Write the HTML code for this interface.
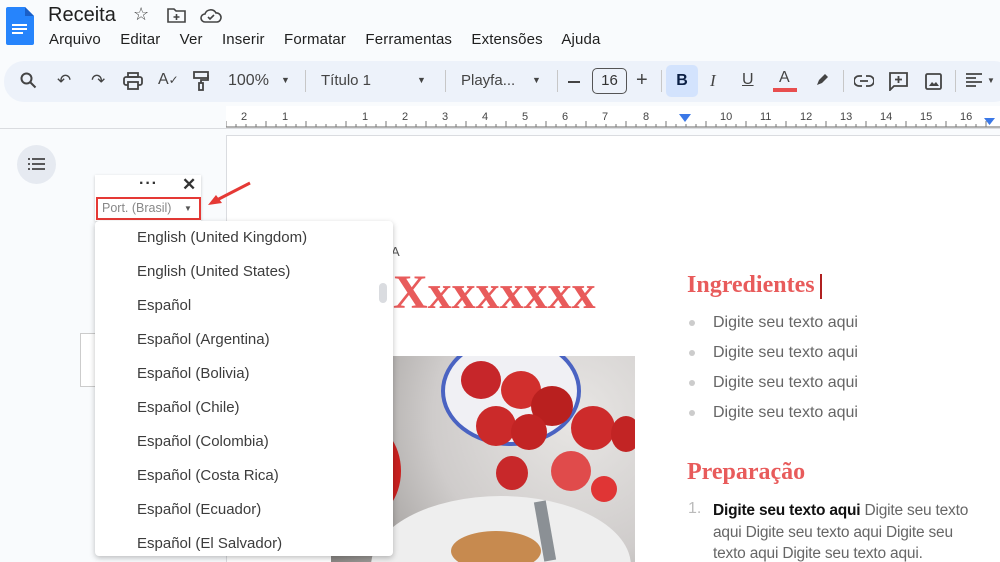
<!DOCTYPE html>
<html><head><meta charset="utf-8"><style>
*{margin:0;padding:0;box-sizing:border-box}
html,body{width:1000px;height:562px;overflow:hidden}
body{background:#f9fbfd;font-family:"Liberation Sans",sans-serif;position:relative;color:#1f1f1f}
.a{position:absolute}
.menu span{margin-right:15px}
.tb{color:#444;font-size:15px}
.sep{position:absolute;top:70px;width:1px;height:22px;background:#c7c7c7}
.item{position:absolute;left:137px;font-size:15px;color:#3c3c3c}
.serif{font-family:"Liberation Serif",serif;font-weight:bold;color:#e85b5b}
.li{position:absolute;left:713px;font-size:16px;color:#666}
.dot{position:absolute;left:689px;width:6px;height:6px;border-radius:50%;background:#ccc}
</style></head><body>
<svg class="a" style="left:6px;top:7px" width="28" height="38" viewBox="0 0 28 38"><path d="M2 0h17l9 9v27a2 2 0 0 1-2 2H2a2 2 0 0 1-2-2V2a2 2 0 0 1 2-2z" fill="#2684fc"/><path d="M19 0v9h9z" fill="#1a5fc7"/><rect x="6" y="17" width="15" height="2" fill="#fff"/><rect x="6" y="21" width="15" height="2" fill="#fff"/><rect x="6" y="25" width="11" height="2" fill="#fff"/></svg>
<div class="a" style="left:48px;top:4px;font-size:20px;color:#1f1f1f">Receita</div>
<div class="a" style="left:133px;top:4px;font-size:18px;color:#444">☆</div>
<svg class="a" style="left:167px;top:8px" width="19" height="15" viewBox="0 0 19 15"><path d="M1 1h6l2 2h9v11H1z" fill="none" stroke="#444" stroke-width="1.6"/><path d="M9.5 6v6M6.5 9h6" stroke="#444" stroke-width="1.6"/></svg>
<svg class="a" style="left:200px;top:8px" width="22" height="15" viewBox="0 0 22 15"><path d="M5 14a4 4 0 0 1 0-8 6 6 0 0 1 11-1 4.5 4.5 0 0 1 1 9z" fill="none" stroke="#444" stroke-width="1.6"/><path d="M8 9l2 2 4-4" fill="none" stroke="#444" stroke-width="1.6"/></svg>
<div class="a menu" style="left:49px;top:31px;font-size:15px;color:#1f1f1f;white-space:nowrap;letter-spacing:0.15px"><span>Arquivo</span> <span>Editar</span> <span>Ver</span> <span>Inserir</span> <span>Formatar</span> <span>Ferramentas</span> <span>Extensões</span> <span>Ajuda</span></div>
<div class="a" style="left:4px;top:61px;width:1010px;height:41px;border-radius:20px;background:#edf2fa"></div>
<svg class="a" style="left:20px;top:72px" width="17" height="17" viewBox="0 0 17 17"><circle cx="6.5" cy="6.5" r="5" fill="none" stroke="#444" stroke-width="2"/><path d="M10 10l5.5 5.5" stroke="#444" stroke-width="2"/></svg>
<div class="a tb" style="left:57px;top:71px;font-size:17px">↶</div>
<div class="a tb" style="left:91px;top:71px;font-size:17px">↷</div>
<svg class="a" style="left:123px;top:72px" width="20" height="18" viewBox="0 0 20 18"><rect x="5" y="1" width="10" height="4" fill="none" stroke="#444" stroke-width="1.8"/><rect x="1" y="5" width="18" height="8" rx="2" fill="none" stroke="#444" stroke-width="1.8"/><rect x="5" y="10" width="10" height="7" fill="#edf2fa" stroke="#444" stroke-width="1.8"/></svg>
<div class="a tb" style="left:158px;top:71px;font-size:16px">A<span style="font-size:12px">✓</span></div>
<svg class="a" style="left:193px;top:71px" width="16" height="20" viewBox="0 0 16 20"><rect x="1" y="1" width="14" height="6" fill="none" stroke="#444" stroke-width="1.8"/><path d="M15 4v5H8v3" fill="none" stroke="#444" stroke-width="1.8"/><rect x="6" y="12" width="4" height="7" fill="none" stroke="#444" stroke-width="1.8"/></svg>
<div class="a tb" style="left:228px;top:72px;font-size:16px">100%</div>
<div class="a tb" style="left:281px;top:75px;font-size:9px">▼</div>
<div class="sep" style="left:305px"></div>
<div class="a tb" style="left:321px;top:72px;font-size:15px">Título 1</div>
<div class="a tb" style="left:417px;top:75px;font-size:9px">▼</div>
<div class="sep" style="left:445px"></div>
<div class="a tb" style="left:461px;top:72px;font-size:15px">Playfa...</div>
<div class="a tb" style="left:532px;top:75px;font-size:9px">▼</div>
<div class="sep" style="left:557px"></div>
<div class="a" style="left:568px;top:81px;width:12px;height:2px;background:#444"></div>
<div class="a" style="left:592px;top:68px;width:35px;height:26px;border:1.5px solid #555;border-radius:5px;font-size:15px;text-align:center;line-height:23px;color:#333">16</div>
<div class="a tb" style="left:636px;top:69px;font-size:20px">+</div>
<div class="sep" style="left:661px"></div>
<div class="a" style="left:666px;top:65px;width:32px;height:32px;border-radius:5px;background:#d3e3fd;font-weight:bold;font-size:16px;text-align:center;line-height:32px;color:#0b1f44">B</div>
<div class="a" style="left:710px;top:71px;font-size:17px;font-style:italic;font-family:'Liberation Serif',serif;color:#444">I</div>
<div class="a" style="left:742px;top:71px;font-size:16px;text-decoration:underline;color:#444">U</div>
<div class="a" style="left:779px;top:69px;font-size:16px;color:#444">A</div>
<div class="a" style="left:773px;top:88px;width:24px;height:4px;background:#e84e4e"></div>
<svg class="a" style="left:814px;top:72px" width="16" height="16" viewBox="0 0 16 16"><path d="M3 13l2-5 6-6 3 3-6 6z" fill="#444"/></svg>
<div class="sep" style="left:843px"></div>
<svg class="a" style="left:854px;top:75px" width="20" height="12" viewBox="0 0 20 12"><path d="M8 1H5a5 5 0 0 0 0 10h3M12 1h3a5 5 0 0 1 0 10h-3M6 6h8" fill="none" stroke="#444" stroke-width="1.8"/></svg>
<svg class="a" style="left:889px;top:72px" width="19" height="19" viewBox="0 0 19 19"><path d="M1 1h17v13H5l-4 4z" fill="none" stroke="#444" stroke-width="1.8"/><path d="M9.5 4v7M6 7.5h7" stroke="#444" stroke-width="1.8"/></svg>
<svg class="a" style="left:925px;top:73px" width="17" height="17" viewBox="0 0 17 17"><rect x="1" y="1" width="15" height="15" rx="1.5" fill="none" stroke="#444" stroke-width="1.8"/><path d="M4 13l3-4 2 2 2-2 3 4z" fill="#444"/></svg>
<div class="sep" style="left:955px"></div>
<svg class="a" style="left:966px;top:73px" width="16" height="15" viewBox="0 0 16 15"><path d="M0 1h16M0 5h10M0 9h16M0 13h10" stroke="#444" stroke-width="1.8"/></svg>
<div class="a tb" style="left:987px;top:76px;font-size:8px">▼</div>
<div class="a" style="left:226px;top:106px;width:774px;height:22px;background:#fff"></div>
<svg class="a" style="left:226px;top:106px" width="774" height="22">
<path d="M0 21h774" stroke="#666"/>
<g font-size="11" fill="#444" font-family="Liberation Sans">
<text x="15" y="14">2</text><text x="56" y="14">1</text><text x="136" y="14">1</text><text x="176" y="14">2</text><text x="216" y="14">3</text><text x="256" y="14">4</text><text x="296" y="14">5</text><text x="336" y="14">6</text><text x="376" y="14">7</text><text x="417" y="14">8</text><text x="494" y="14">10</text><text x="534" y="14">11</text><text x="574" y="14">12</text><text x="614" y="14">13</text><text x="654" y="14">14</text><text x="694" y="14">15</text><text x="734" y="14">16</text>
</g>
<path d="M0 21 V15 M10 21V18 M20 21V18 M30 21V18 M40 21V15 M50 21V18 M60 21V18 M70 21V18 M80 21V15 M90 21V18 M100 21V18 M110 21V18 M120 21V15 M130 21V18 M140 21V18 M150 21V18 M160 21V15 M170 21V18 M180 21V18 M190 21V18 M200 21V15 M210 21V18 M220 21V18 M230 21V18 M240 21V15 M250 21V18 M260 21V18 M270 21V18 M280 21V15 M290 21V18 M300 21V18 M310 21V18 M320 21V15 M330 21V18 M340 21V18 M350 21V18 M360 21V15 M370 21V18 M380 21V18 M390 21V18 M400 21V15 M410 21V18 M420 21V18 M430 21V18 M440 21V15 M450 21V18 M460 21V18 M470 21V18 M480 21V15 M490 21V18 M500 21V18 M510 21V18 M520 21V15 M530 21V18 M540 21V18 M550 21V18 M560 21V15 M570 21V18 M580 21V18 M590 21V18 M600 21V15 M610 21V18 M620 21V18 M630 21V18 M640 21V15 M650 21V18 M660 21V18 M670 21V18 M680 21V15 M690 21V18 M700 21V18 M710 21V18 M720 21V15 M730 21V18 M740 21V18 M750 21V18 M760 21V15" stroke="#777"/>
<path d="M453 8h12l-6 8z" fill="#3b78e7"/><path d="M758 12h11l-5.5 7z" fill="#3b78e7"/>
</svg>
<div class="a" style="left:0;top:128px;width:1000px;height:1px;background:#dadce0"></div>
<div class="a" style="left:226px;top:135px;width:774px;height:427px;background:#fff;border-left:1px solid #dadce0;border-top:1px solid #dadce0"></div>
<div class="a" style="left:17px;top:145px;width:39px;height:39px;border-radius:50%;background:#e6eaf1"></div>
<svg class="a" style="left:28px;top:158px" width="17" height="12" viewBox="0 0 17 12"><path d="M0 1h2M4 1h13M0 6h2M4 6h13M0 11h2M4 11h13" stroke="#444" stroke-width="1.8"/></svg>
<div class="a" style="left:80px;top:333px;width:20px;height:54px;background:#fff;border:1px solid #ccc"></div>
<div class="a" style="left:331px;top:356px;width:304px;height:206px;background:radial-gradient(circle at 80% 30%,#e8e6e4,#cfcccb 50%,#8a8784 100%);overflow:hidden">
<div class="a" style="left:110px;top:-20px;width:140px;height:110px;border-radius:50%;background:#f0f0f4;border:4px solid #4a63c2"></div>
<div class="a" style="left:130px;top:5px;width:40px;height:38px;border-radius:50%;background:#c6262a"></div>
<div class="a" style="left:170px;top:15px;width:40px;height:38px;border-radius:50%;background:#d12f2d"></div>
<div class="a" style="left:200px;top:30px;width:42px;height:40px;border-radius:50%;background:#b9201f"></div>
<div class="a" style="left:145px;top:50px;width:40px;height:40px;border-radius:50%;background:#cb2a2a"></div>
<div class="a" style="left:180px;top:58px;width:36px;height:36px;border-radius:50%;background:#c22424"></div>
<div class="a" style="left:240px;top:50px;width:44px;height:44px;border-radius:50%;background:#cd2b2b"></div>
<div class="a" style="left:280px;top:60px;width:30px;height:36px;border-radius:50%;background:#c22424"></div>
<div class="a" style="left:-10px;top:65px;width:80px;height:100px;border-radius:50%;background:#c8201f"></div>
<div class="a" style="left:165px;top:100px;width:32px;height:34px;border-radius:50%;background:#c8282a"></div>
<div class="a" style="left:220px;top:95px;width:40px;height:40px;border-radius:50%;background:#e04b4b"></div>
<div class="a" style="left:260px;top:120px;width:26px;height:26px;border-radius:50%;background:#e03535"></div>
<div class="a" style="left:40px;top:140px;width:260px;height:140px;border-radius:50%;background:#eeeeee"></div>
<div class="a" style="left:120px;top:175px;width:90px;height:40px;border-radius:50%;background:#c78a4f"></div>
<div class="a" style="left:208px;top:145px;width:12px;height:60px;background:#8b9095;transform:rotate(-10deg)"></div>
</div>
<div class="a" style="left:391px;top:244px;font-size:13px;color:#555">A</div>
<div class="a serif" style="left:393px;top:270px;font-size:48px;letter-spacing:0;line-height:46px">Xxxxxxxx</div>
<div class="a serif" style="left:687px;top:272px;font-size:24px">Ingredientes</div>
<div class="a" style="left:820px;top:274px;width:2px;height:25px;background:#b02020"></div>
<div class="dot" style="top:320px"></div><div class="li" style="top:314px">Digite seu texto aqui</div>
<div class="dot" style="top:350px"></div><div class="li" style="top:344px">Digite seu texto aqui</div>
<div class="dot" style="top:380px"></div><div class="li" style="top:374px">Digite seu texto aqui</div>
<div class="dot" style="top:410px"></div><div class="li" style="top:404px">Digite seu texto aqui</div>
<div class="a serif" style="left:687px;top:459px;font-size:24px">Preparação</div>
<div class="a" style="left:688px;top:500px;font-size:16px;color:#bbb">1.</div>
<div class="a" style="left:713px;top:500px;width:275px;font-size:15.5px;line-height:21.5px;color:#666;letter-spacing:-0.2px"><b style="color:#111">Digite seu texto aqui</b> Digite seu texto aqui Digite seu texto aqui Digite seu texto aqui Digite seu texto aqui.</div>
<div class="a" style="left:95px;top:175px;width:106px;height:46px;background:#fff;box-shadow:0 1px 3px rgba(0,0,0,.2)"></div>
<div class="a" style="left:139px;top:175px;font-size:16px;font-weight:bold;color:#333;letter-spacing:1px">···</div>
<div class="a" style="left:182px;top:175px;font-size:17px;color:#333;font-weight:bold">✕</div>
<div class="a" style="left:96px;top:197px;width:105px;height:23px;border:2.5px solid #e53935"></div>
<div class="a" style="left:102px;top:201px;font-size:12.5px;color:#888">Port. (Brasil)</div>
<div class="a" style="left:184px;top:204px;font-size:8px;color:#555">▼</div>
<svg class="a" style="left:205px;top:180px" width="48" height="28" viewBox="0 0 48 28"><path d="M45 3L8 22" stroke="#e53935" stroke-width="3"/><path d="M3 25l14-2-6-8z" fill="#e53935"/></svg>
<div class="a" style="left:95px;top:221px;width:298px;height:335px;background:#fff;border-radius:4px;box-shadow:0 2px 6px rgba(0,0,0,.25)"></div>
<div class="a" style="left:379px;top:283px;width:8px;height:20px;border-radius:4px;background:#dadce0"></div>
<div class="item" style="top:229px">English (United Kingdom)</div>
<div class="item" style="top:263px">English (United States)</div>
<div class="item" style="top:297px">Español</div>
<div class="item" style="top:331px">Español (Argentina)</div>
<div class="item" style="top:365px">Español (Bolivia)</div>
<div class="item" style="top:399px">Español (Chile)</div>
<div class="item" style="top:433px">Español (Colombia)</div>
<div class="item" style="top:467px">Español (Costa Rica)</div>
<div class="item" style="top:501px">Español (Ecuador)</div>
<div class="item" style="top:535px">Español (El Salvador)</div>
</body></html>
